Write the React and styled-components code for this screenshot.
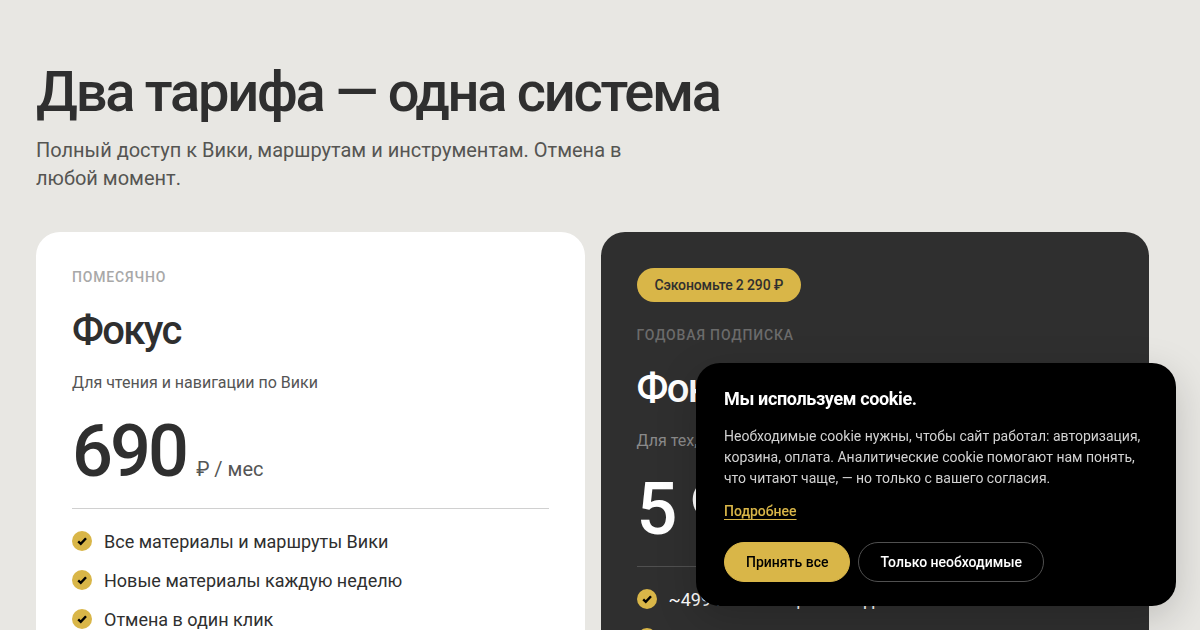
import React from 'react';
import styled, { createGlobalStyle } from 'styled-components';

const GlobalStyle = createGlobalStyle`
  * {
    box-sizing: border-box;
  }
  body {
    margin: 0;
    background: #e8e7e3;
    color: #2f2f2f;
    font-family: Roboto, "Noto Sans", sans-serif;
  }
  h1, h2, p, ul {
    margin: 0;
    padding: 0;
  }
`
const Page = styled.main`
  padding: 64px 51px 64px 36px;
`
const Heading = styled.h1`
  font-size: 56px;
  line-height: 56px;
  font-weight: 500;
  letter-spacing: -0.04em;
`
const Lead = styled.p`
  max-width: 640px;
  margin-top: 16px;
  font-size: 20px;
  line-height: 28px;
  color: #555552;
`
const Plans = styled.section`
  display: grid;
  grid-template-columns: 1fr 1fr;
  gap: 16px;
  margin-top: 40px;
`
const Card = styled.article`
  display: flex;
  flex-direction: column;
  padding: 36px;
  border-radius: 24px;
  background: ${props => props.$dark ? '#2f2f2f' : '#fff'};
  color: ${props => props.$dark ? '#fff' : '#2f2f2f'};
`
const Badge = styled.span`
  align-self: flex-start;
  margin-bottom: 24px;
  padding: 0 18px;
  border-radius: 17px;
  background: #d9b648;
  color: #2f2f2f;
  font-size: 14px;
  line-height: 34px;
  font-weight: 500;
  letter-spacing: -0.01em;
`
const Period = styled.p`
  font-size: 14px;
  line-height: 18px;
  font-weight: 500;
  letter-spacing: 0.06em;
  text-transform: uppercase;
  color: ${props => props.$dark ? '#6b6b6b' : '#a8a8a8'};
`
const PlanName = styled.h2`
  margin-top: 22px;
  font-size: 40px;
  line-height: 46px;
  font-weight: 500;
  letter-spacing: -0.04em;
`
const Summary = styled.p`
  margin-top: 18px;
  font-size: 16px;
  line-height: 22px;
  color: ${props => props.$dark ? '#8a8a8a' : '#555'};
`
const Price = styled.p`
  display: flex;
  align-items: baseline;
  gap: 10px;
  margin-top: 20px;
`
const Amount = styled.span`
  font-size: 72px;
  line-height: 76px;
  font-weight: 500;
  letter-spacing: -0.04em;
`
const Unit = styled.span`
  font-size: 20px;
  line-height: 28px;
  color: ${props => props.$dark ? '#a8a8a8' : '#555'};
`
const Features = styled.ul`
  display: flex;
  flex-direction: column;
  gap: 14px;
  margin-top: 18px;
  padding-top: 20px;
  border-top: 1px solid ${props => props.$dark ? '#505050' : '#d0d0d0'};
  list-style: none;
`
const Feature = styled.li`
  display: flex;
  align-items: flex-start;
  gap: 12px;
  font-size: 18px;
  line-height: 25px;
`
const CheckIcon = styled.svg`
  flex: none;
  width: 20px;
  height: 20px;
  margin-top: 2px;
`
const Cookie = styled.aside`
  position: fixed;
  right: 24px;
  bottom: 24px;
  width: 480px;
  max-width: calc(100% - 48px);
  padding: 24px 28px;
  border-radius: 24px;
  background: #000;
  color: #fff;
  box-shadow: 0 12px 40px rgba(0, 0, 0, 0.18);
`
const CookieTitle = styled.h2`
  font-size: 18px;
  line-height: 24px;
  font-weight: 700;
  letter-spacing: -0.02em;
`
const CookieText = styled.p`
  margin-top: 15px;
  font-size: 14px;
  line-height: 21px;
  color: #d2d2d2;
`
const CookieLink = styled.a`
  display: inline-block;
  margin-top: 12px;
  font-size: 14px;
  line-height: 21px;
  font-weight: 500;
  color: #d9b648;
  text-underline-offset: 3px;
`
const Actions = styled.div`
  display: flex;
  flex-wrap: wrap;
  gap: 8px;
  margin-top: 20px;
`
const Button = styled.button`
  height: 40px;
  padding: 0 21px;
  border: 1px solid ${props => props.$primary ? '#d9b648' : '#505050'};
  border-radius: 20px;
  background: ${props => props.$primary ? '#d9b648' : 'transparent'};
  color: ${props => props.$primary ? '#000' : '#fff'};
  font-family: inherit;
  font-size: 14px;
  font-weight: 500;
  cursor: pointer;
`

const plans = [
  {
    period: 'Помесячно',
    name: 'Фокус',
    summary: 'Для чтения и навигации по Вики',
    amount: '690',
    unit: '₽ / мес',
    features: ['Все материалы и маршруты Вики', 'Новые материалы каждую неделю', 'Отмена в один клик'],
  },
  {
    dark: true,
    badge: 'Сэкономьте 2 290 ₽',
    period: 'Годовая подписка',
    name: 'Фокус Год',
    summary: 'Для тех, кто остаётся',
    amount: '5 990',
    unit: '₽ / год',
    features: ['~499 ₽ в месяц — выгодней', 'Все материалы и маршруты Вики', 'Отмена в один клик'],
  },
]

function Check() {
  return (
    <CheckIcon viewBox="0 0 20 20" aria-hidden="true">
      <circle cx="10" cy="10" r="10" fill="#d9b648"/>
      <path d="M6.2 10.4L8.8 12.9L14 7.3" fill="none" stroke="#000" strokeWidth="2.4"/>
    </CheckIcon>
  )
}

function Plan({ plan }) {
  return (
    <Card $dark={plan.dark}>
      {plan.badge && <Badge>{plan.badge}</Badge>}
      <Period $dark={plan.dark}>{plan.period}</Period>
      <PlanName>{plan.name}</PlanName>
      <Summary $dark={plan.dark}>{plan.summary}</Summary>
      <Price>
        <Amount>{plan.amount}</Amount>
        <Unit $dark={plan.dark}>{plan.unit}</Unit>
      </Price>
      <Features $dark={plan.dark}>
        {plan.features.map(text => (
          <Feature key={text}>
            <Check/>
            {text}
          </Feature>
        ))}
      </Features>
    </Card>
  )
}

export default class App extends React.Component {
  render(){
    return(
      <>
        <GlobalStyle/>
        <Page>
          <Heading>Два тарифа — одна система</Heading>
          <Lead>Полный доступ к Вики, маршрутам и инструментам. Отмена в любой момент.</Lead>
          <Plans>
            {plans.map(plan => <Plan key={plan.name} plan={plan}/>)}
          </Plans>
        </Page>
        <Cookie aria-label="Cookie">
          <CookieTitle>Мы используем cookie.</CookieTitle>
          <CookieText>
            Необходимые cookie нужны, чтобы сайт работал: авторизация, корзина, оплата. Аналитические cookie помогают нам понять, что читают чаще, — но только с вашего согласия.
          </CookieText>
          <CookieLink href="#cookies">Подробнее</CookieLink>
          <Actions>
            <Button type="button" $primary>Принять все</Button>
            <Button type="button">Только необходимые</Button>
          </Actions>
        </Cookie>
      </>
    )
  }
}
